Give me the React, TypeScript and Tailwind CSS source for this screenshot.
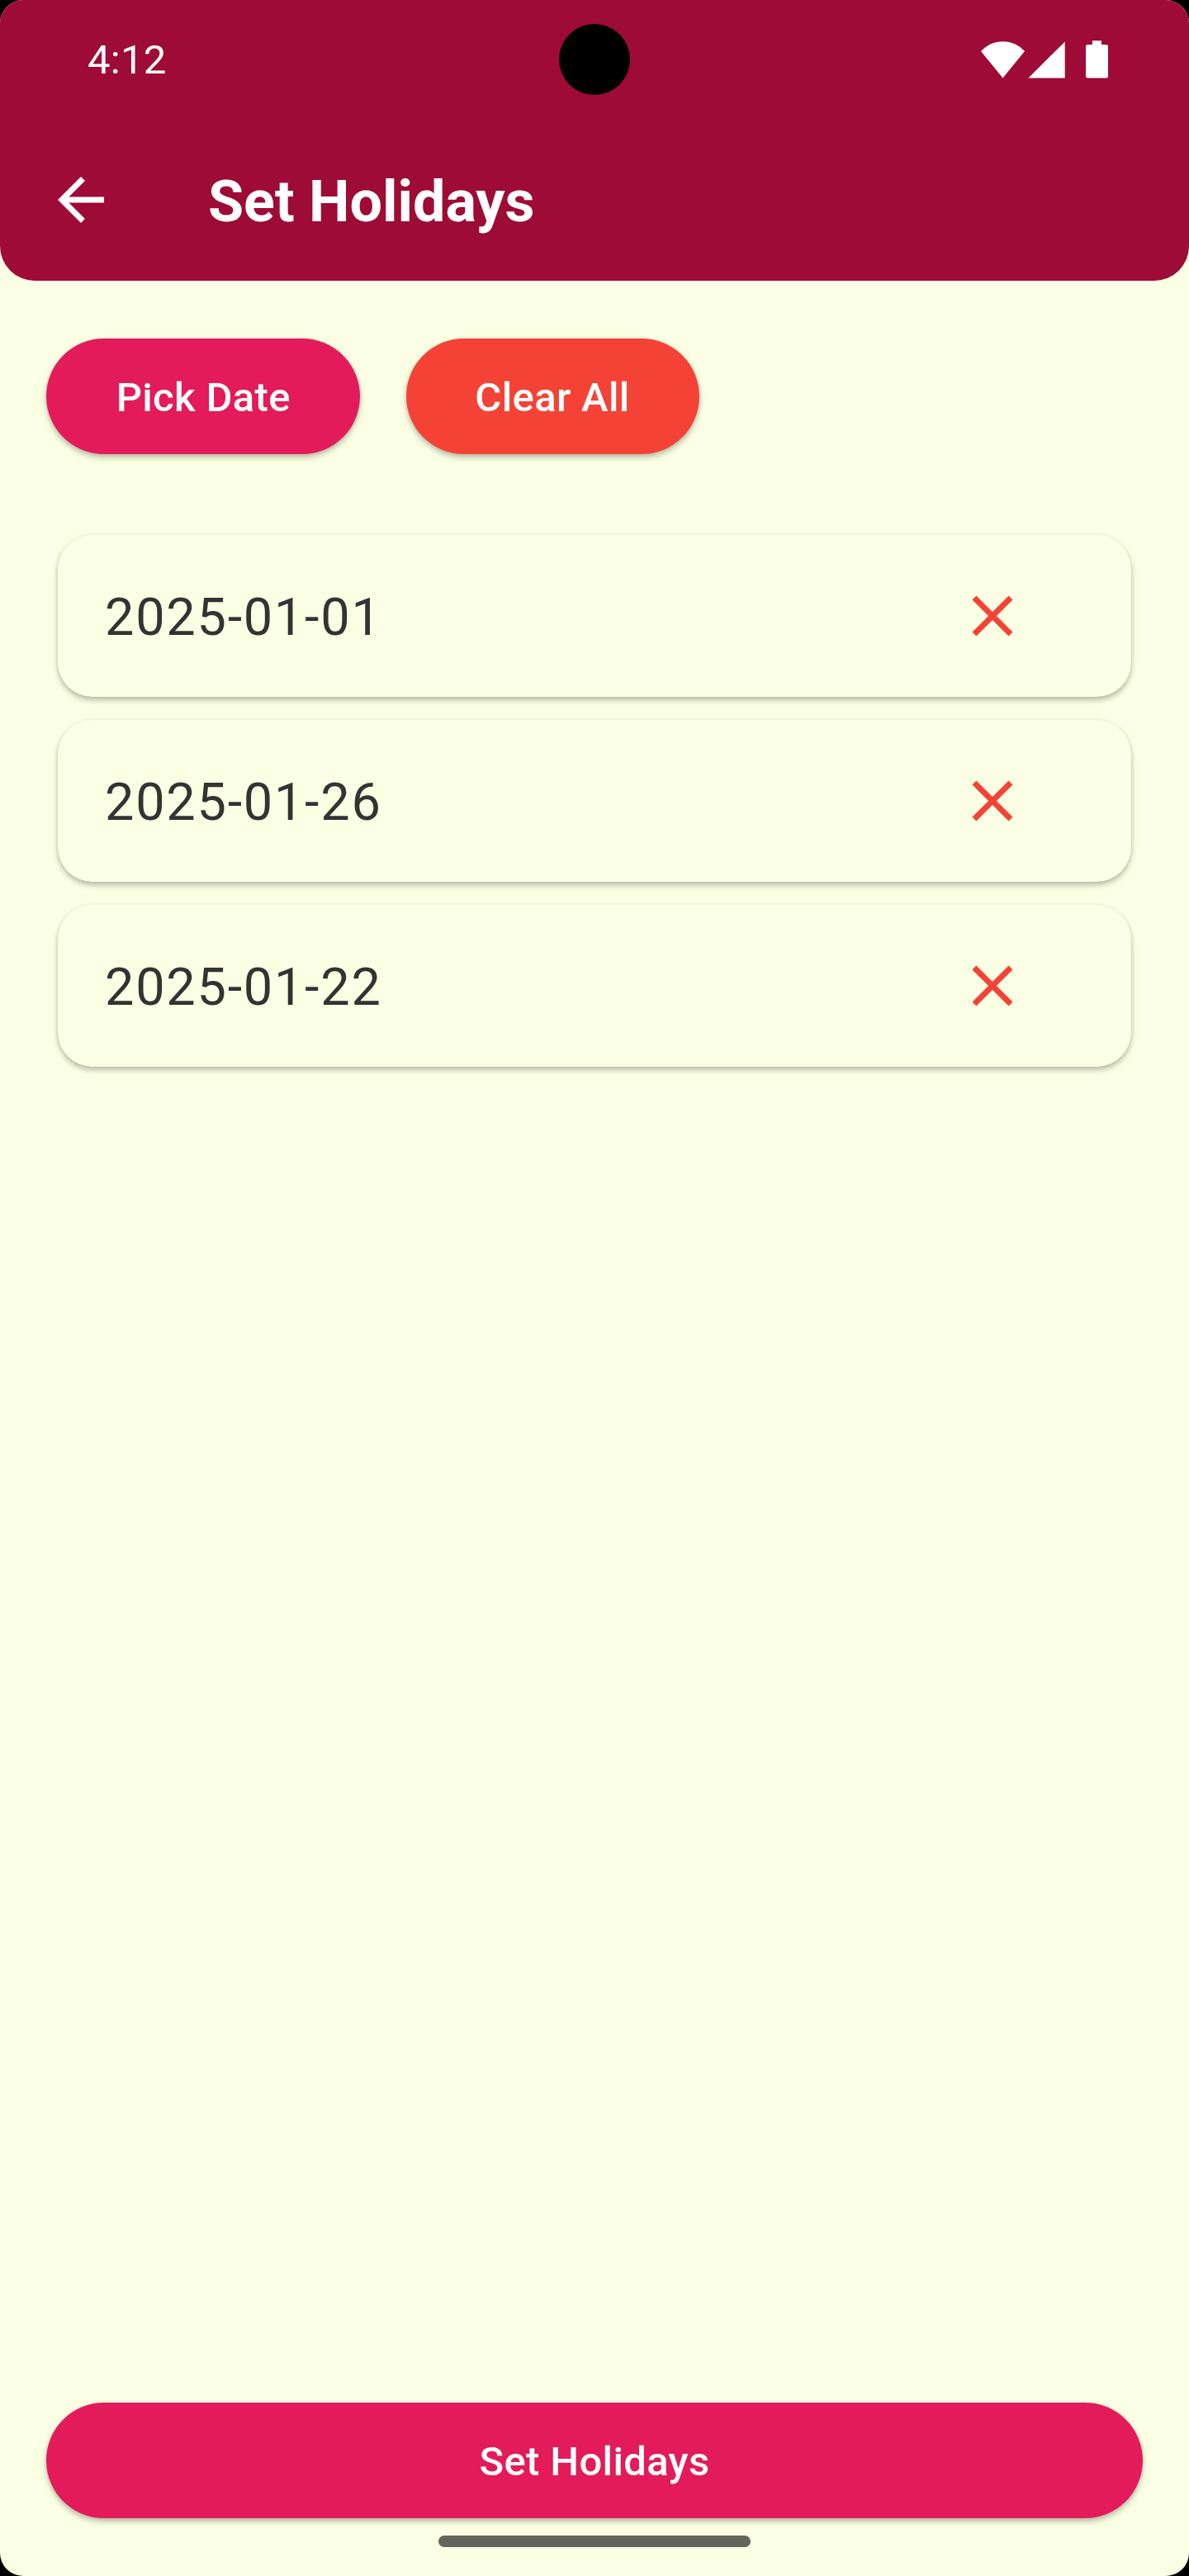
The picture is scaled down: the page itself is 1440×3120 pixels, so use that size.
const holidays = ["2025-01-01", "2025-01-26", "2025-01-22"];

function StatusBar() {
  return (
    <div className="relative flex h-[144px] items-center justify-between pr-[98px] pl-[106px]">
      <span className="pt-px text-[49px] leading-[58px] tracking-[0.25px]">4:12</span>
      <div className="absolute top-[29px] left-[677px] size-[86px] rounded-full bg-black" />
      <svg className="h-[46px] w-[154px]" viewBox="1188 49 154 46" fill="white">
        <path d="M1188 62C1195 54.5 1204.500 50.200 1214.500 50.200S1234 54.500 1241 62L1214.500 94.500Z" />
        <path d="M1245.500 94.600H1289.700V50.400Z" />
        <path d="M1323 49.300H1334V54H1339.500A2.500 2.500 0 0 1 1342 56.500V92A2.500 2.500 0 0 1 1339.500 94.600H1317.500A2.500 2.500 0 0 1 1315 92V56.500A2.500 2.500 0 0 1 1317.500 54H1323Z" />
      </svg>
    </div>
  );
}

function Header() {
  return (
    <header className="h-[340px] rounded-b-[42px] bg-[#9e0b36] text-white">
      <StatusBar />
      <div className="flex h-[196px] items-center gap-28 pl-14">
        <button aria-label="Back">
          <svg className="size-[84px]" viewBox="0 0 24 24" fill="currentColor">
            <path d="M20 11H7.830l5.590-5.590L12 4l-8 8 8 8 1.410-1.410L7.830 13H20v-2z" />
          </svg>
        </button>
        <h1 className="pt-[3px] text-[70px] leading-[82px] font-bold">Set Holidays</h1>
      </div>
    </header>
  );
}

const buttonBase =
  "flex h-[140px] items-center justify-center rounded-full pt-[4px] text-[49px] leading-[58px] font-medium tracking-[0.35px] text-white shadow-[0_4px_7px_rgba(0,0,0,0.26),0_0_5px_rgba(0,0,0,0.06)]";

function HolidayCard({ date }: { date: string }) {
  return (
    <li className="flex h-[196px] items-center justify-between rounded-[42px] bg-[#fbffe3] pr-[126px] pl-[57px] shadow-[0_4px_7px_rgba(0,0,0,0.26),0_0_5px_rgba(0,0,0,0.06)]">
      <span className="pt-[4px] text-[63px] leading-[74px] tracking-[1.75px] text-[#333333]">{date}</span>
      <button aria-label="Remove" className="text-[#f44336]">
        <svg className="size-[84px]" viewBox="0 0 24 24" fill="currentColor">
          <path d="M19 6.410L17.590 5 12 10.590 6.410 5 5 6.410 10.590 12 5 17.590 6.410 19 12 13.410 17.590 19 19 17.590 13.410 12z" />
        </svg>
      </button>
    </li>
  );
}

export default function App() {
  return (
    <div className="h-[3120px] w-[1440px] bg-black font-['Roboto',sans-serif]">
      <div className="flex h-full flex-col overflow-hidden rounded-[28px] bg-[#fbffe3]">
        <Header />
        <div className="flex gap-14 px-14 pt-[70px]">
          <button className={`${buttonBase} w-[379.500px] bg-[#e31b5a] pl-px`}>Pick Date</button>
          <button className={`${buttonBase} w-[355px] bg-[#f44336]`}>Clear All</button>
        </div>
        <ul className="flex flex-1 flex-col gap-7 px-[70px] pt-[98px]">
          {holidays.map((date) => (
            <HolidayCard key={date} date={date} />
          ))}
        </ul>
        <footer className="flex flex-col items-center px-14 pb-[35px]">
          <button className={`${buttonBase} w-full bg-[#e31b5a]`}>Set Holidays</button>
          <div className="mt-[21px] h-[14px] w-[378px] rounded-full bg-[#65665b]" />
        </footer>
      </div>
    </div>
  );
}
